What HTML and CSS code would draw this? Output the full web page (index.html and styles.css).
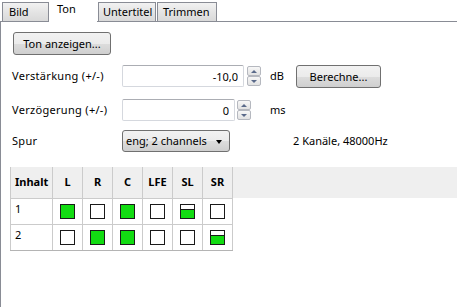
FILE: index.html
```html
<!DOCTYPE html>
<html lang="de">
<head>
	<meta charset="UTF-8">
	<title>Ton</title>
	<link rel="stylesheet" href="styles.css">
</head>
<body>
	<div class="tabs">
		<div class="tab t-bild">Bild</div>
		<div class="tab active t-ton">Ton</div>
		<div class="tab t-unter">Untertitel</div>
		<div class="tab t-trim">Trimmen</div>
	</div>
	<div class="panel">
		<button class="btn show">Ton anzeigen...</button>

		<div class="row r1">
			<label class="lbl">Verstärkung (+/-)</label>
			<div class="field">
				<input class="num gain" type="text" value="-10,0">
				<span class="spin"><i class="up"></i><i class="down"></i></span>
			</div>
			<span class="unit">dB</span>
			<button class="btn calc">Berechne...</button>
		</div>

		<div class="row r2">
			<label class="lbl">Verzögerung (+/-)</label>
			<div class="field">
				<input class="num delay" type="text" value="0">
				<span class="spin"><i class="up"></i><i class="down"></i></span>
			</div>
			<span class="unit">ms</span>
		</div>

		<div class="row r3">
			<label class="lbl">Spur</label>
			<div class="select">eng; 2 channels<span class="arrow"></span></div>
			<span class="info">2 Kanäle, 48000Hz</span>
		</div>

		<table class="map">
			<tr>
				<th class="first">Inhalt</th><th>L</th><th>R</th><th>C</th><th>LFE</th><th>SL</th><th>SR</th><th class="fill"></th>
			</tr>
			<tr>
				<td class="first">1</td>
				<td><span class="box on"></span></td>
				<td><span class="box"></span></td>
				<td><span class="box on"></span></td>
				<td><span class="box"></span></td>
				<td><span class="box half"></span></td>
				<td><span class="box"></span></td>
				<td class="fill"></td>
			</tr>
			<tr>
				<td class="first">2</td>
				<td><span class="box"></span></td>
				<td><span class="box on"></span></td>
				<td><span class="box on"></span></td>
				<td><span class="box"></span></td>
				<td><span class="box"></span></td>
				<td><span class="box half"></span></td>
				<td class="fill"></td>
			</tr>
		</table>
	</div>
</body>
</html>
```

FILE: styles.css
```css
* {margin: 0; padding: 0; box-sizing: border-box;}
body {font: 11px/14px "Noto Sans", "Liberation Sans", sans-serif; color: #000; background: #fff; width: 457px; height: 307px; overflow: hidden;}

/* tab strip */
.tabs {display: flex; align-items: flex-end; height: 22px; padding-left: 2px; border-bottom: 1px solid #898c95;}
.tab {height: 19px; border: 1px solid #898c95; border-bottom: none; padding: 2px 0 0 6px; background: linear-gradient(#f2f2f2, #e4e4e4 50%, #d9d9d9); white-space: nowrap;}
.tab.t-bild {width: 47px;}
.tab.t-ton {width: 48px;}
.tab.t-unter {width: 58px; margin-left: 1px; padding-left: 4px;}
.tab.t-trim {width: 60px; margin-left: 1px; padding-left: 5px;}
.tab.active {height: 22px; margin-bottom: -1px; background: #fff; border-color: #fff; padding: 1px 0 0 7px;}

.panel {height: 285px; border-left: 1px solid #898c95; padding-top: 10px;}

.btn {font: 11px "Noto Sans", "Liberation Sans", sans-serif; color: #000; height: 23px; border: 1px solid #707070; border-radius: 3px; background: linear-gradient(#f2f2f2, #ebebeb 50%, #dddddd 50%, #cfcfcf);}
.btn.show {margin-left: 12px; width: 98px; display: block;}
.btn.calc {width: 85px;}

.row {display: flex; align-items: center; height: 22px; padding-left: 11px;}
.row.r1 {margin-top: 10px;}
.row.r2 {margin-top: 12px;}
.row.r3 {margin-top: 9px;}
.lbl {width: 110px; letter-spacing: 0.3px;}
.field {display: flex; align-items: center; width: 148px;}
.num {font: 11px "Noto Sans", "Liberation Sans", sans-serif; height: 22px; text-align: right; padding-right: 5px; border: 1px solid #d5d8de; border-top-color: #abadb3; border-radius: 2px; outline: none;}
.num.gain {width: 122px;}
.num.delay {width: 113px;}

.spin {display: flex; flex-direction: column; width: 14px; height: 20px; margin-left: 3px;}
.r2 .spin {margin-left: 2px;}
.spin i {height: 10px; border: 1px solid #b5b8bf; border-radius: 2px; background: linear-gradient(#f7f7f7, #e2e2e2); position: relative;}
.spin i::after {content: ""; position: absolute; left: 3px; top: 3px; border-left: 3px solid transparent; border-right: 3px solid transparent;}
.spin .up::after {border-bottom: 3px solid #5a6a8a;}
.spin .down::after {border-top: 3px solid #5a6a8a;}

.unit {width: 26px;}

.select {position: relative; width: 108px; height: 22px; padding: 3px 0 0 3px; border: 1px solid #707070; border-radius: 3px; background: linear-gradient(#f2f2f2, #ebebeb 50%, #dddddd 50%, #cfcfcf);}
.select .arrow {position: absolute; right: 7px; top: 9px; border-left: 3px solid transparent; border-right: 3px solid transparent; border-top: 4px solid #000;}
.info {margin-left: 63px;}

/* channel map */
.map {margin: 15px 0 0 9px; border-collapse: collapse; width: 447px;}
.map th, .map td {border: 1px solid #cbcbcb; width: 30px; text-align: center; padding: 0;}
.map th {height: 31px; background: #efefef; font-weight: bold;}
.map td {height: 26px; vertical-align: middle;}
.map .first {width: 42px; text-align: left; padding-left: 4px;}
.map td.first {vertical-align: top; padding-top: 3px;}
.map .fill {width: auto; border-top: none; border-right: none; border-bottom: none;}
.map td.fill {border-left-color: #cbcbcb;}
.map tr:last-child td {border-bottom-color: #b4b4b4;}
.map tr:last-child td.fill {border-bottom: none;}
.map tr:first-child th {border-top: none;}

.box {display: inline-block; vertical-align: middle; width: 15px; height: 15px; border: 1px solid #1a1a1a; background: #fff; margin-top: 1px;}
.box.on {background: #12dc12;}
.box.half {background: linear-gradient(#fff 4px, #1a1a1a 4px, #1a1a1a 5px, #12dc12 5px);}
```
